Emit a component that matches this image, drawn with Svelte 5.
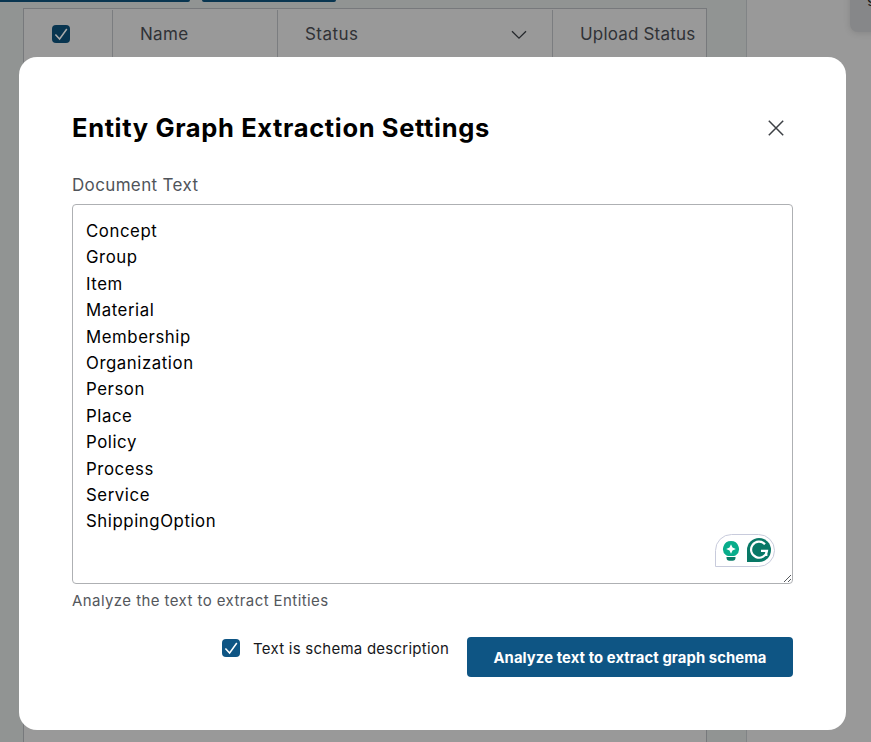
<script lang="ts">
  const entities = ['Concept', 'Group', 'Item', 'Material', 'Membership', 'Organization', 'Person', 'Place', 'Policy', 'Process', 'Service', 'ShippingOption'];
  let text = $state(entities.join('\n'));
  let isSchema = $state(true);
</script>

{#snippet check()}
  <svg viewBox="0 0 18 18" width="18" height="18" aria-hidden="true"><path d="M3.4 9.4 7.6 14 14.8 4" fill="none" stroke="currentColor" stroke-width="1.5" /></svg>
{/snippet}

<div class="screen">
  <div class="page">
    <div class="main">
      <div class="actions"><span class="first"></span><span class="second"></span></div>
      <div class="table">
        <div class="thead">
          <div class="cell select"><span class="box dim">{@render check()}</span></div>
          <div class="cell name">Name</div>
          <div class="cell status">Status
            <svg class="chevron" viewBox="0 0 16 10" width="16" height="10" aria-hidden="true"><path d="M1 1.2 8 8.2 15 1.2" fill="none" stroke="#26292d" stroke-width="1.3" /></svg>
          </div>
          <div class="cell upload">Upload Status</div>
        </div>
      </div>
    </div>
    <aside><div class="bubble">g</div></aside>
  </div>

  <div class="modal" role="dialog" aria-modal="true" aria-labelledby="title">
    <header>
      <h2 id="title">Entity Graph Extraction Settings</h2>
      <button class="close" aria-label="Close">
        <svg viewBox="0 0 16 16" width="16" height="16"><path d="M.8.8 15.2 15.2M15.2.8.8 15.2" fill="none" stroke="#3d4045" stroke-width="1.5" /></svg>
      </button>
    </header>
    <label class="label" for="doc"><span>Document Text</span></label>
    <div class="field">
      <textarea id="doc" bind:value={text} spellcheck="false"></textarea>
      <div class="assistant">
        <svg class="bulb" viewBox="0 0 18 22" width="18" height="22" aria-hidden="true">
          <path d="M9 1a8 8 0 0 1 4.9 14.3c-.7.5-1.2.7-2 .7H6.1c-.8 0-1.3-.2-2-.7A8 8 0 0 1 9 1Z" fill="#08ad8b" />
          <path d="M9 4.2 10.5 7.5 13.8 9 10.5 10.5 9 13.8 7.5 10.5 4.2 9 7.5 7.5Z" fill="#fff" />
          <path d="M4.500 17h9v.7a3 3 0 0 1-3 3h-3a3 3 0 0 1-3-3Z" fill="#087d68" />
        </svg>
        <svg viewBox="0 0 24 24" width="24" height="24" aria-hidden="true">
          <path d="M0 24V12A12 12 0 1 1 12 24Z" fill="#087866" />
          <path d="M18 6.300A8 8 0 1 0 20 12.900H14M19.300 12.900V18" fill="none" stroke="#fff" stroke-width="2.200" />
        </svg>
      </div>
      <svg class="grip" viewBox="0 0 9 9" width="9" height="9" aria-hidden="true"><path d="M1 8 8 1M5 8 8 5" fill="none" stroke="#55585c" stroke-width="1" /></svg>
    </div>
    <p class="hint"><span>Analyze the text to extract Entities</span></p>
    <footer>
      <label class="option">
        <input type="checkbox" bind:checked={isSchema} />
        <span class="box">{#if isSchema}{@render check()}{/if}</span>
        <span class="option-text">Text is schema description</span>
      </label>
      <button class="primary"><span>Analyze text to extract graph schema</span></button>
    </footer>
  </div>
</div>

<style>
  :global(body) { margin: 0; overflow: hidden; }
  * { box-sizing: border-box; }
  .screen { position: relative; width: 871px; height: 742px; overflow: hidden; font-family: Inter, 'Liberation Sans', sans-serif; }
  .page { display: flex; height: 742px; background: #999; }
  .main { width: 747px; background: #919493; border-right: 1px solid #818486; display: flex; flex-direction: column; }
  .actions { display: flex; gap: 12px; height: 8px; }
  .actions span { height: 2px; background: #083550; }
  .first { width: 190px; border-radius: 0 0 4px 0; }
  .second { width: 134px; border-radius: 0 0 4px 4px; }
  .table { flex: 1; width: 684px; margin-left: 23px; border: 1px solid #77797c; border-bottom: 0; background: #999; }
  .thead { display: flex; height: 50px; padding-top: 1px; }
  .cell { display: flex; align-items: center; padding-bottom: 2px; border-right: 1px solid #7b7d80; color: #303236; font-size: 17px; letter-spacing: .3px; white-space: nowrap; }
  .select { width: 89px; padding-left: 28px; }
  .name { width: 165px; padding-left: 27px; }
  .status { width: 275px; padding-right: 25px; padding-left: 27px; justify-content: space-between; letter-spacing: .45px; }
  .chevron { margin-top: 2px; }
  .upload { flex: 1; padding-left: 27px; border: 0; letter-spacing: .18px; }
  .box { display: block; width: 18px; height: 18px; border-radius: 4px; background: #0e5584; color: #fff; }
  .box svg { display: block; }
  .dim { background: #083550; color: #aaa; }
  aside { position: relative; flex: 1; }
  .bubble { position: absolute; left: 103px; top: -20px; width: 60px; height: 52px; padding: 8px 0 0 17px; border-radius: 8px; background: #868789; box-shadow: 0 1px 7px #0002; font-size: 15px; color: #111; }
  .modal { position: absolute; left: 19px; top: 57px; width: 827px; height: 673px; border-radius: 18px; background: #fff; padding: 53px; }
  header { display: flex; align-items: center; justify-content: space-between; height: 36px; padding-right: 9px; }
  h2 { margin: 0; font-size: 25.5px; line-height: 36px; font-weight: 700; letter-spacing: .64px; color: #000; white-space: nowrap; }
  button { border: 0; padding: 0; font: inherit; }
  .close { background: none; width: 16px; height: 16px; }
  .close svg { display: block; }
  .label { display: block; margin-top: 26px; height: 32px; line-height: 26px; font-size: 17px; color: #50545a; letter-spacing: .35px; }
  .field { position: relative; height: 380px; }
  textarea { display: block; width: 721px; height: 380px; border: 1px solid #aeb0b3; border-radius: 4px; margin: 0; padding: 13px; font: 16.8px/26.4px Inter, 'Liberation Sans', sans-serif; letter-spacing: .57px; color: #000; resize: none; outline: 0; background: #fff; overflow: hidden; }
  .assistant { position: absolute; right: 18px; bottom: 17px; width: 60px; height: 33px; display: flex; align-items: center; gap: 7px; padding: 0 0 1px 6px; border: 1px solid #c8cbdc; border-radius: 17px 17px 17px 0; background: #fff; }
  .bulb { margin-top: 1px; }
  .grip { position: absolute; right: 1px; bottom: 1px; }
  .hint { margin: 4px 0 0; font-size: 15px; line-height: 26px; letter-spacing: .42px; color: #54575c; }
  footer { display: flex; justify-content: flex-end; margin-top: 23px; height: 40px; gap: 18px; }
  .option { display: flex; align-items: center; height: 23px; }
  .option .box { margin-bottom: 1px; }
  .option input { position: absolute; opacity: 0; width: 0; height: 0; margin: 0; }
  .option-text { margin-left: 13px; width: 196px; font-size: 15px; letter-spacing: .25px; color: #16181b; white-space: nowrap; }
  .primary { width: 326px; height: 40px; padding-top: 1px; border-radius: 4px; background: #0e5584; color: #fff; font-size: 14.8px; letter-spacing: .1px; font-weight: 700; white-space: nowrap; }
</style>
